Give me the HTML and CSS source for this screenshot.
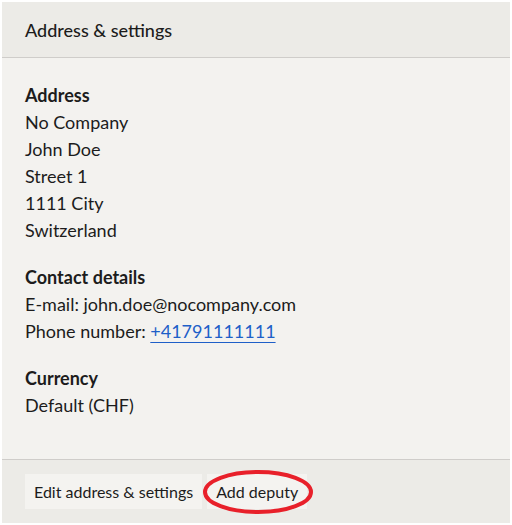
FILE: index.html
```html
<html>
  <head>
    <title>Address &amp; settings</title>
    <link rel="stylesheet" href="styles.css">
  </head>
  <body>
    <div class="panel">
      <div class="panel-head">Address &amp; settings</div>
      <div class="panel-body">
        <div class="group">
          <h3>Address</h3>
          <p>No Company</p>
          <p>John Doe</p>
          <p>Street 1</p>
          <p>1111 City</p>
          <p>Switzerland</p>
        </div>
        <div class="group">
          <h3>Contact details</h3>
          <p>E-mail: john.doe@nocompany.com</p>
          <p>Phone number: <a href="#">+41791111111</a></p>
        </div>
        <div class="group">
          <h3>Currency</h3>
          <p>Default (CHF)</p>
        </div>
      </div>
      <div class="panel-foot">
        <button class="btn">Edit address &amp; settings</button>
        <span class="marked">
          <button class="btn">Add deputy</button>
          <svg class="circle" width="114" height="48" viewBox="0 0 114 48">
            <ellipse cx="57" cy="24" rx="53" ry="20" fill="none" stroke="#e8202a" stroke-width="4"/>
          </svg>
        </span>
      </div>
    </div>
  </body>
</html>
```

FILE: styles.css
```css
body {
  margin: 2px;
  background-color: #ffffff;
  color: #1c1c1c;
  font-family: "Lato", "Noto Sans", sans-serif;
  font-size: 18px;
}
.panel {
  width: 508px;
  height: 521px;
  display: flex;
  flex-direction: column;
  background-color: #f3f2ef;
}
.panel-head {
  height: 55px;
  padding: 0 23px;
  display: flex;
  align-items: center;
  background-color: #ecebe7;
  border-bottom: 1px solid #cfcdca;
  font-weight: 500;
  font-size: 18px;
}
.panel-body {
  flex: 1;
  padding: 24px 23px 0;
}
.group {
  margin-bottom: 20px;
}
.group h3 {
  margin: 0;
  font-size: 18px;
  font-weight: 700;
  line-height: 27px;
}
.group p {
  margin: 0;
  line-height: 27px;
}
.group a {
  color: #1e5fc8;
  text-decoration: underline;
  text-underline-offset: 4px;
}
.panel-foot {
  height: 64px;
  padding: 0 23px;
  display: flex;
  align-items: center;
  gap: 5px;
  background-color: #ecebe7;
  border-top: 1px solid #cfcdca;
  box-sizing: border-box;
}
.btn {
  height: 35px;
  padding: 0 9px;
  border: none;
  background-color: #f4f3f0;
  color: #1c1c1c;
  font-family: inherit;
  font-size: 16px;
}
.marked {
  position: relative;
  display: inline-block;
}
.marked .btn {
  display: block;
}
.circle {
  position: absolute;
  left: -6px;
  top: -6px;
}
```
